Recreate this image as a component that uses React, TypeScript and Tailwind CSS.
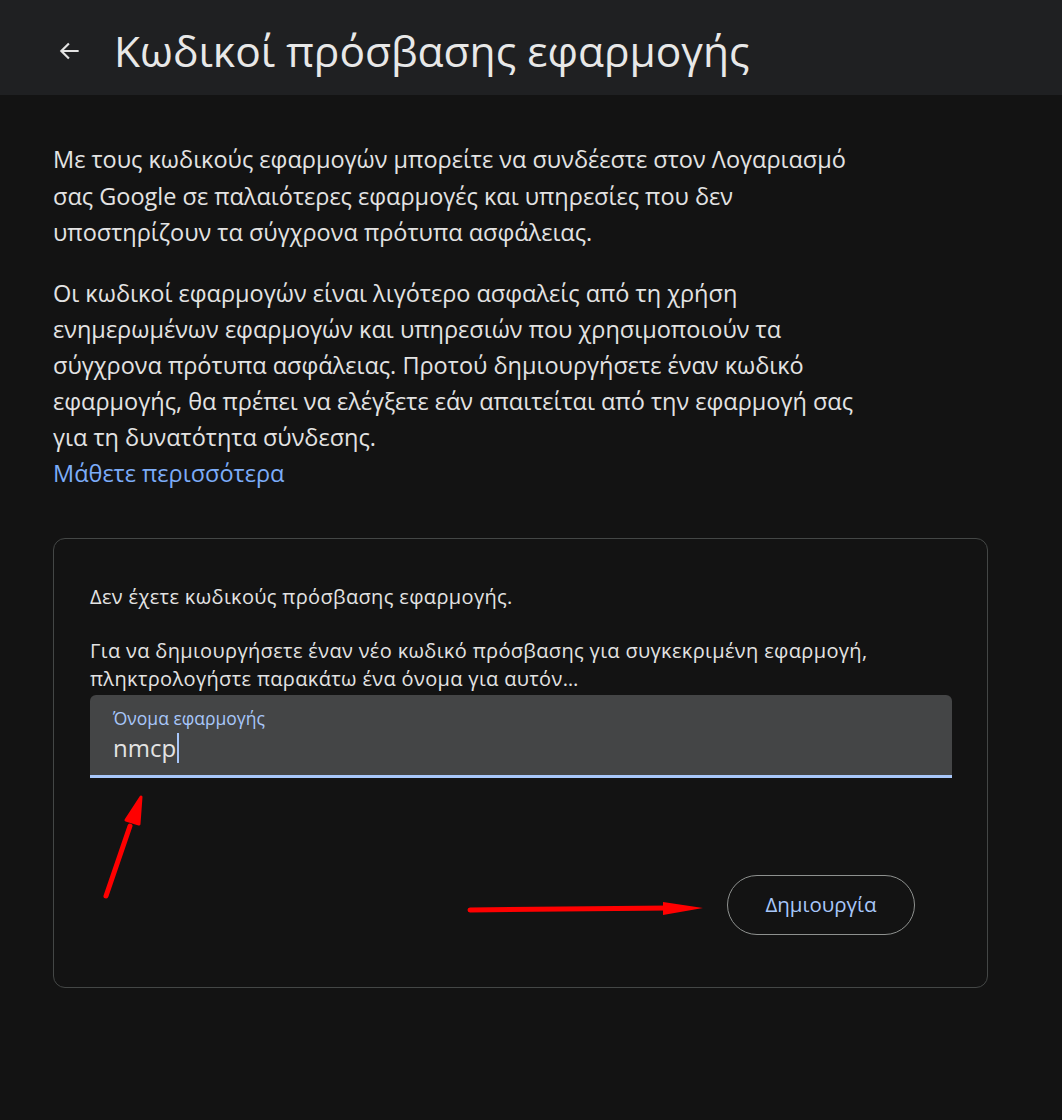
import React from "react";

export default function App() {
  const sans = { fontFamily: '"Open Sans", "Noto Sans", sans-serif' };
  return (
    <div className="relative min-h-[1120px] w-full bg-[#131313] text-[#e3e3e3]" style={sans}>
      <header className="flex h-[95px] items-center bg-[#1f2022] pl-[57px]">
        <svg width="26" height="26" viewBox="0 0 24 24" className="mr-[31px] mt-[6px]" fill="none" stroke="#e3e3e3" strokeWidth="2">
          <path d="M20 12H4M11 5l-7 7 7 7" />
        </svg>
        <h1 className="mt-[6px] text-[42.5px] font-normal leading-[52px] text-[#e8e8e8]">Κωδικοί πρόσβασης εφαρμογής</h1>
      </header>

      <main className="px-[53px] pt-[46px]">
        <p className="text-[23.5px] leading-[36.5px] text-[#e3e3e3]">
          Με τους κωδικούς εφαρμογών μπορείτε να συνδέεστε στον Λογαριασμό
          <br />
          σας Google σε παλαιότερες εφαρμογές και υπηρεσίες που δεν
          <br />
          υποστηρίζουν τα σύγχρονα πρότυπα ασφάλειας.
        </p>
        <p className="mt-[24px] text-[23.5px] leading-[36px] text-[#e3e3e3]">
          Οι κωδικοί εφαρμογών είναι λιγότερο ασφαλείς από τη χρήση
          <br />
          ενημερωμένων εφαρμογών και υπηρεσιών που χρησιμοποιούν τα
          <br />
          σύγχρονα πρότυπα ασφάλειας. Προτού δημιουργήσετε έναν κωδικό
          <br />
          εφαρμογής, θα πρέπει να ελέγξετε εάν απαιτείται από την εφαρμογή σας
          <br />
          για τη δυνατότητα σύνδεσης.
          <br />
          <a className="text-[#7cacf8]">Μάθετε περισσότερα</a>
        </p>

        <section className="mt-[47px] w-[935px] rounded-[12px] border border-[#444746] px-[36px] pb-[52px] pt-[44px]">
          <p className="text-[20px] leading-[28px] tracking-[0.35px]">Δεν έχετε κωδικούς πρόσβασης εφαρμογής.</p>
          <p className="mt-[26px] text-[20px] leading-[28px] tracking-[0.35px]">
            Για να δημιουργήσετε έναν νέο κωδικό πρόσβασης για συγκεκριμένη εφαρμογή,
            <br />
            πληκτρολογήστε παρακάτω ένα όνομα για αυτόν…
          </p>
          <div className="mt-[2px] flex h-[83px] w-[862px] flex-col rounded-t-[6px] border-b-[3px] border-[#a8c7fa] bg-[#444546] px-[23px] pt-[12px]">
            <span className="text-[17.5px] leading-[22px] text-[#a8c7fa]">Όνομα εφαρμογής</span>
            <span className="mt-[3px] flex items-center text-[24px] leading-[32px] text-[#e3e3e3]">
              nmcp<span className="ml-[1px] inline-block h-[30px] w-[2px] bg-[#a8c7fa]" />
            </span>
          </div>
          <div className="mt-[97px] flex justify-end pr-[36px]">
            <button className="h-[60px] w-[188px] rounded-full border border-[#8e918f] text-[20.5px] font-medium text-[#a8c7fa]">
              Δημιουργία
            </button>
          </div>
        </section>
      </main>

      <svg className="pointer-events-none absolute left-0 top-0" width="1062" height="1120">
        <line x1="106" y1="896" x2="130" y2="826" stroke="#ff0000" strokeWidth="5" strokeLinecap="round" />
        <polygon points="141,797 126,820 139,824" fill="#ff0000" stroke="#ff0000" strokeWidth="3" strokeLinejoin="round" />
        <line x1="470" y1="910" x2="670" y2="908" stroke="#ff0000" strokeWidth="5" strokeLinecap="round" />
        <polygon points="703,908 663,902 663,915" fill="#ff0000" />
      </svg>
    </div>
  );
}
